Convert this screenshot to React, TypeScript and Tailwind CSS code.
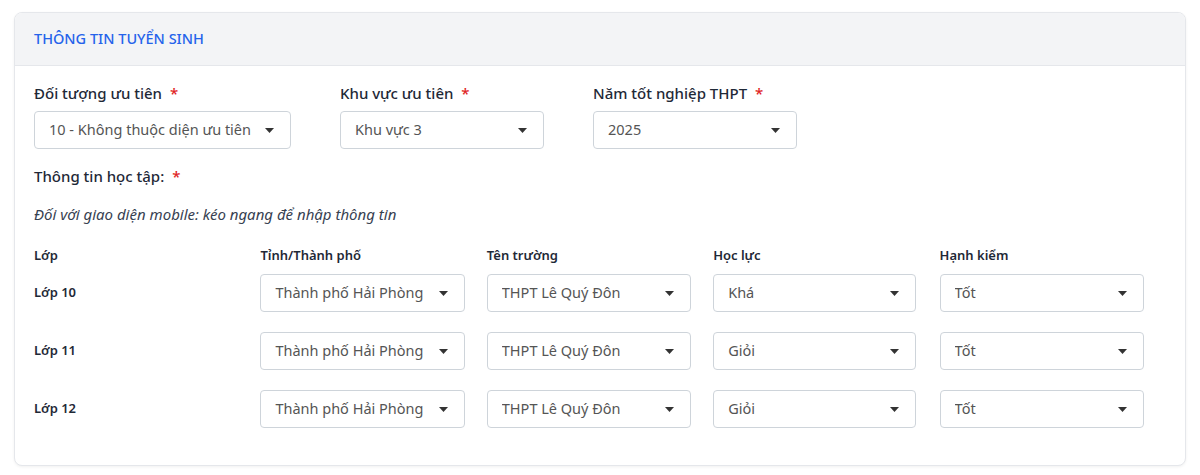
import React from "react";

function Caret() {
  return (
    <svg width="9" height="5" viewBox="0 0 9 5" className="shrink-0">
      <path d="M0 0 L9 0 L4.5 5 Z" fill="#333" />
    </svg>
  );
}

function Select({ value, className }: { value: string; className: string }) {
  return (
    <div
      className={`flex h-[38px] items-center justify-between rounded-[4px] border border-[#ced4da] bg-white pl-[14px] pr-[16px] text-[14.5px] text-[#555] ${className}`}
    >
      <span className="truncate">{value}</span>
      <Caret />
    </div>
  );
}

function Req() {
  return <span className="ml-[4px] text-[#e02424]">*</span>;
}

const rows = [
  { lop: "Lớp 10", hl: "Khá" },
  { lop: "Lớp 11", hl: "Giỏi" },
  { lop: "Lớp 12", hl: "Giỏi" },
];

export default function App() {
  return (
    <div
      className="min-h-[475px] bg-white px-[14px] pt-[12px] pb-[8px]"
      style={{ fontFamily: '"Noto Sans", "Open Sans", sans-serif' }}
    >
      <div className="overflow-hidden rounded-[8px] border border-[#e5e7eb] bg-white shadow-[0_1px_3px_rgba(0,0,0,0.06)]">
        <div className="flex h-[53px] items-center border-b border-[#e5e7eb] bg-[#f3f4f6] px-[19px]">
          <span className="text-[14.5px] font-medium text-[#2563eb]">THÔNG TIN TUYỂN SINH</span>
        </div>
        <div className="px-[19px] pt-[16px] pb-[37px]">
          <div className="flex gap-[49px]">
            <div className="flex flex-col">
              <div className="text-[15px] font-medium leading-[22px] text-[#1f2937]">
                Đối tượng ưu tiên <Req />
              </div>
              <Select value="10 - Không thuộc diện ưu tiên" className="mt-[7px] w-[257px]" />
            </div>
            <div className="flex flex-col">
              <div className="text-[15px] font-medium leading-[22px] text-[#1f2937]">
                Khu vực ưu tiên <Req />
              </div>
              <Select value="Khu vực 3" className="mt-[7px] w-[204px]" />
            </div>
            <div className="flex flex-col">
              <div className="text-[15px] font-medium leading-[22px] text-[#1f2937]">
                Năm tốt nghiệp THPT <Req />
              </div>
              <Select value="2025" className="mt-[7px] w-[204px]" />
            </div>
          </div>
          <div className="mt-[16px] text-[15px] font-medium leading-[22px] text-[#1f2937]">
            Thông tin học tập: <Req />
          </div>
          <div className="mt-[16px] text-[15px] italic leading-[22px] text-[#374151]">
            Đối với giao diện mobile: kéo ngang để nhập thông tin
          </div>
          <div className="mt-[20px] grid grid-cols-5">
            {["Lớp", "Tỉnh/Thành phố", "Tên trường", "Học lực", "Hạnh kiểm"].map((h) => (
              <div key={h} className="text-[13px] font-semibold leading-[20px] text-[#1f2937]">
                {h}
              </div>
            ))}
          </div>
          <div className="mt-[9px] flex flex-col gap-[20px]">
            {rows.map((r) => (
              <div key={r.lop} className="grid grid-cols-5 items-center">
                <div className="text-[13px] font-semibold text-[#1f2937]">{r.lop}</div>
                <Select value="Thành phố Hải Phòng" className="w-[205px]" />
                <Select value="THPT Lê Quý Đôn" className="w-[204px]" />
                <Select value={r.hl} className="w-[203px]" />
                <Select value="Tốt" className="w-[204px]" />
              </div>
            ))}
          </div>
        </div>
      </div>
    </div>
  );
}
